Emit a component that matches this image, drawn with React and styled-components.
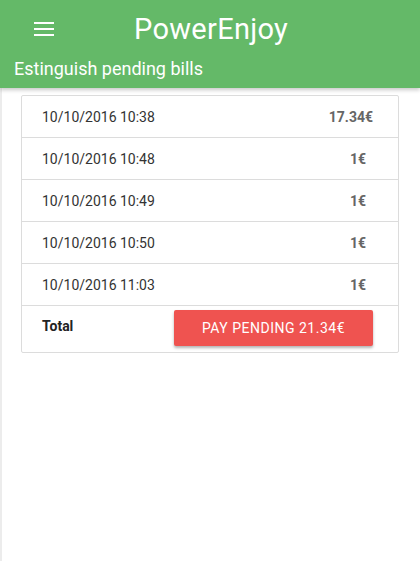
import React from "react";
import styled, { createGlobalStyle } from "styled-components";

const GlobalStyle = createGlobalStyle`
  html, body {
    margin: 0;
    padding: 0;
    background: #fff;
    font-family: Roboto, "Noto Sans", sans-serif;
  }
`;

const Page = styled.div`
  width: 420px;
  height: 561px;
  overflow: hidden;
  background: #fff;
`;

const Header = styled.header`
  background: #64b968;
  color: #fff;
  height: 88px;
  box-shadow: 0 2px 4px rgba(0, 0, 0, 0.22);
  position: relative;
  z-index: 1;
`;

const TopBar = styled.div`
  display: flex;
  align-items: center;
  height: 58px;
  padding-left: 34px;
`;

const Menu = styled.button`
  display: flex;
  flex-direction: column;
  justify-content: space-between;
  width: 20px;
  height: 14px;
  padding: 0;
  border: none;
  background: none;

  span {
    display: block;
    height: 2px;
    background: #fff;
  }
`;

const Title = styled.h1`
  margin: 0 0 0 80px;
  font-size: 29px;
  font-weight: 400;
  letter-spacing: 0.3px;
`;

const Subtitle = styled.h2`
  margin: 0;
  padding-left: 14px;
  font-size: 18px;
  font-weight: 400;
  line-height: 22px;
`;

const Body = styled.main`
  height: 473px;
  border-left: 2px solid #ececec;
  padding: 7px 21px 0 19px;
`;

const Card = styled.div`
  border: 1px solid #dcdcdc;
  border-radius: 2px;
`;

const Row = styled.div`
  display: flex;
  align-items: center;
  justify-content: space-between;
  height: ${(p) => p.h || 41}px;
  padding: 0 25px 0 20px;
  border-top: ${(p) => (p.first ? "none" : "1px solid #dcdcdc")};
  font-size: 14px;
  color: #333;
`;

const Amount = styled.span`
  font-weight: 700;
  color: #666;
  padding-right: ${(p) => p.pad || 0}px;
`;

const Total = styled.span`
  font-weight: 700;
  color: #222;
  margin-top: -6px;
`;

const PayButton = styled.button`
  width: 199px;
  height: 36px;
  margin-top: -2px;
  border: none;
  border-radius: 2px;
  background: #ef5350;
  color: #fff;
  font-family: Roboto, sans-serif;
  font-size: 14px;
  font-weight: 400;
  letter-spacing: 0.5px;
  text-transform: uppercase;
  box-shadow: 0 2px 3px rgba(0, 0, 0, 0.3);
`;

const bills = [
  { date: "10/10/2016 10:38", amount: "17.34€", pad: 0 },
  { date: "10/10/2016 10:48", amount: "1€", pad: 7 },
  { date: "10/10/2016 10:49", amount: "1€", pad: 7 },
  { date: "10/10/2016 10:50", amount: "1€", pad: 7 },
  { date: "10/10/2016 11:03", amount: "1€", pad: 7 },
];

export default function App() {
  return (
    <Page>
      <GlobalStyle />
      <Header>
        <TopBar>
          <Menu aria-label="menu">
            <span />
            <span />
            <span />
          </Menu>
          <Title>PowerEnjoy</Title>
        </TopBar>
        <Subtitle>Estinguish pending bills</Subtitle>
      </Header>
      <Body>
        <Card>
          {bills.map((b, i) => (
            <Row key={i} first={i === 0}>
              <span>{b.date}</span>
              <Amount pad={b.pad}>{b.amount}</Amount>
            </Row>
          ))}
          <Row h={46}>
            <Total>Total</Total>
            <PayButton>Pay pending 21.34€</PayButton>
          </Row>
        </Card>
      </Body>
    </Page>
  );
}
